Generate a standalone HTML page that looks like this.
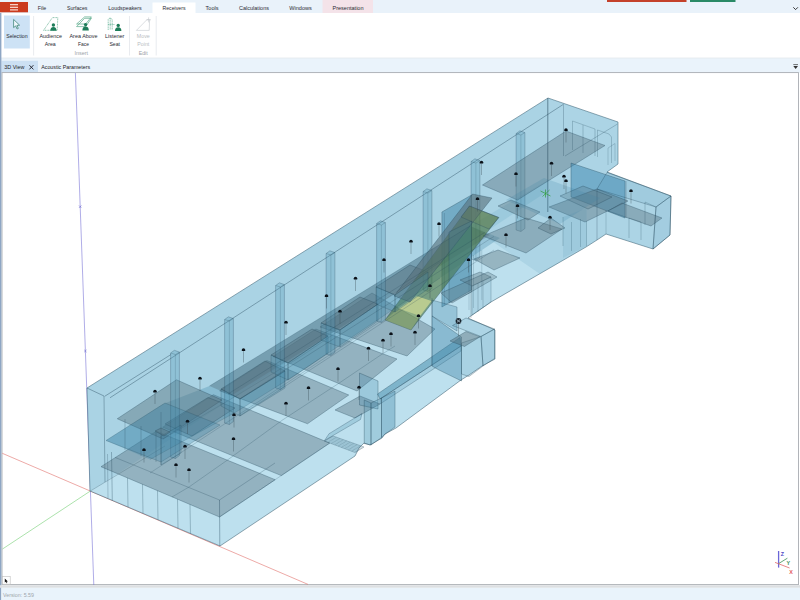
<!DOCTYPE html>
<html lang="en">
<head>
<meta charset="utf-8">
<title>3D View - Receivers</title>
<style>
html,body{margin:0;padding:0;background:#fff;width:800px;height:600px;overflow:hidden}
svg{display:block;font-family:"Liberation Sans",sans-serif}
text{font-family:"Liberation Sans",sans-serif}
.t{font-size:6.2px;fill:#2b2b33}
.g{font-size:6.2px;fill:#9aa0a6}
.lg{font-size:6.2px;fill:#b9bdc2}
</style>
</head>
<body>
<svg width="800" height="600" viewBox="0 0 800 600">
<!-- window chrome -->
<rect x="0" y="0" width="800" height="600" fill="#ffffff"/>
<rect x="0" y="0" width="800" height="13" fill="#e9f2fa"/>
<rect x="322.5" y="0" width="50.5" height="13" fill="#f4e3e9"/>
<rect x="152.5" y="2.5" width="43" height="11" fill="#ffffff"/>
<rect x="0" y="2" width="28" height="10.3" fill="#cb3b1e"/>
<g stroke="#ffe9e2" stroke-width="1.1"><line x1="10" y1="4.7" x2="18" y2="4.7"/><line x1="10" y1="7.3" x2="18" y2="7.3"/><line x1="10" y1="9.9" x2="18" y2="9.9"/></g>
<rect x="607" y="0" width="79.5" height="2" fill="#c4412a"/>
<rect x="690" y="0" width="45.5" height="2" fill="#2a8a66"/>
<polyline points="793.3,7.3 795.6,9.6 797.9,7.3" fill="none" stroke="#222" stroke-width="0.9"/>
<g class="t" text-anchor="middle">
<text x="42" y="9.8" textLength="8.5" lengthAdjust="spacingAndGlyphs">File</text>
<text x="77.2" y="9.8" textLength="20.5" lengthAdjust="spacingAndGlyphs">Surfaces</text>
<text x="125" y="9.8" textLength="33.5" lengthAdjust="spacingAndGlyphs">Loudspeakers</text>
<text x="174" y="9.8" textLength="23" lengthAdjust="spacingAndGlyphs">Receivers</text>
<text x="212" y="9.8" textLength="13" lengthAdjust="spacingAndGlyphs">Tools</text>
<text x="254" y="9.8" textLength="30" lengthAdjust="spacingAndGlyphs">Calculations</text>
<text x="300.5" y="9.8" textLength="22.5" lengthAdjust="spacingAndGlyphs">Windows</text>
<text x="348" y="9.8" textLength="31" lengthAdjust="spacingAndGlyphs">Presentation</text>
</g>
<!-- ribbon body -->
<rect x="0" y="13" width="800" height="45" fill="#ffffff"/>
<rect x="4" y="15.5" width="25.8" height="33" fill="#cde2f5"/>
<g stroke="#dfe3e8" stroke-width="0.7"><line x1="33.6" y1="16" x2="33.6" y2="55.5"/><line x1="129.5" y1="16" x2="129.5" y2="55.5"/><line x1="156.2" y1="16" x2="156.2" y2="55.5"/></g>
<!-- selection cursor -->
<path d="M13.6 19.4 L13.6 27.6 L15.7 25.9 L17.1 29 L18.3 28.4 L16.9 25.4 L19.6 25.2 Z" fill="#eef6fc" stroke="#2d7a68" stroke-width="0.7" stroke-linejoin="round"/>
<g class="t" text-anchor="middle">
<text x="16.9" y="38.2" textLength="21.5" lengthAdjust="spacingAndGlyphs">Selection</text>
<text x="50.7" y="38.2" textLength="22.5" lengthAdjust="spacingAndGlyphs">Audience</text>
<text x="50.2" y="45.7" textLength="11" lengthAdjust="spacingAndGlyphs">Area</text>
<text x="83.5" y="38.2" textLength="28" lengthAdjust="spacingAndGlyphs">Area Above</text>
<text x="83.5" y="45.7" textLength="11" lengthAdjust="spacingAndGlyphs">Face</text>
<text x="114.7" y="38.2" textLength="19.5" lengthAdjust="spacingAndGlyphs">Listener</text>
<text x="114.7" y="45.7" textLength="10.6" lengthAdjust="spacingAndGlyphs">Seat</text>
</g>
<g class="lg" text-anchor="middle">
<text x="143.3" y="38.2" textLength="13" lengthAdjust="spacingAndGlyphs">Move</text>
<text x="143.3" y="45.7" textLength="12" lengthAdjust="spacingAndGlyphs">Point</text>
</g>
<g class="g" text-anchor="middle">
<text x="81.2" y="55" textLength="13.5" lengthAdjust="spacingAndGlyphs">Insert</text>
<text x="143.2" y="55" textLength="9" lengthAdjust="spacingAndGlyphs">Edit</text>
</g>
<!-- ribbon icons -->
<g id="ic-aud">
<polygon points="43.6,30.3 52.4,17.6 57.8,17.6 57.2,30.3" fill="none" stroke="#3c9a76" stroke-width="0.6" stroke-dasharray="1 0.6"/>
<circle cx="53.4" cy="25" r="1.7" fill="#1d7d59"/><path d="M50.3 30.8 Q50.3 27 53.4 27 Q56.5 27 56.5 30.8 Z" fill="#1d7d59"/>
</g>
<g id="ic-above">
<polygon points="76.6,26.6 84.6,18.3 91.4,18.3 85.6,26.6" fill="none" stroke="#3c9a76" stroke-width="0.6"/>
<polygon points="76.6,24 84.6,16.9 91.4,16.9 85.6,24" fill="none" stroke="#3c9a76" stroke-width="0.6"/>
<circle cx="85.6" cy="24.6" r="1.7" fill="#1d7d59"/><path d="M82.4 30.6 Q82.4 26.6 85.6 26.6 Q88.8 26.6 88.8 30.6 Z" fill="#1d7d59"/>
</g>
<g id="ic-seat">
<path d="M108.2 30 L108.2 19.5 Q110 16.8 112.2 19.5 L112.2 30 M110.2 18 L110.2 30 M108.2 24.5 L114.5 24.5" fill="none" stroke="#4aa584" stroke-width="0.6" stroke-dasharray="1.2 0.5"/>
<circle cx="118.2" cy="25.4" r="1.7" fill="#1d7d59"/><path d="M115 31 Q115 27.3 118.2 27.3 Q121.4 27.3 121.4 31 Z" fill="#1d7d59"/>
</g>
<g id="ic-move" stroke="#c3c7cc" stroke-width="0.6" fill="none">
<polygon points="136.4,30.4 147,19.6 149.6,19.6 149.2,30.4"/><line x1="148.6" y1="17.4" x2="148.6" y2="22.4"/><line x1="146.2" y1="19.8" x2="151" y2="19.8"/>
</g>
<!-- document tab strip -->
<rect x="0" y="58" width="800" height="15" fill="#eaf3fb"/>
<rect x="0" y="57.6" width="800" height="0.8" fill="#e3e8ee"/>
<rect x="1.5" y="60.8" width="36.5" height="11.7" fill="#cce0f3"/>
<text x="4.3" y="69" class="t" style="fill:#1c1c26" textLength="20" lengthAdjust="spacingAndGlyphs">3D View</text>
<g stroke="#1c1c26" stroke-width="0.9"><line x1="29.4" y1="65.2" x2="33.4" y2="69.4"/><line x1="33.4" y1="65.2" x2="29.4" y2="69.4"/></g>
<text x="41.2" y="69" class="t" style="fill:#1c1c26" textLength="49" lengthAdjust="spacingAndGlyphs">Acoustic Parameters</text>
<line x1="793.3" y1="64.6" x2="798" y2="64.6" stroke="#333" stroke-width="0.7"/><polygon points="793.3,66 798,66 795.65,69" fill="#333"/>
<!-- viewport -->
<rect x="2" y="72.6" width="796.5" height="512" fill="#ffffff" stroke="#a9adb2" stroke-width="0.9"/>
<rect x="0" y="13" width="1.4" height="587" fill="#8ea6c4"/>
<rect x="0" y="585.2" width="800" height="2.6" fill="#dcdfe2"/>
<rect x="1.4" y="587.8" width="798.6" height="12.2" fill="#e9f3fb"/>
<text x="3" y="597.3" style="font-size:6px;fill:#9ea6ab" textLength="31" lengthAdjust="spacingAndGlyphs">Version: 5.59</text>
<rect x="2.6" y="576.6" width="7.6" height="7.6" fill="#ffffff" stroke="#bdbdbd" stroke-width="0.6"/>
<path d="M4.8 578.4 L4.8 582.6 L5.9 581.7 L6.7 583.3 L7.3 583 L6.6 581.5 L7.9 581.4 Z" fill="#111"/>
<!-- world axes -->
<g stroke-width="0.6" fill="none">
<line x1="75.4" y1="73" x2="93.8" y2="585" stroke="#7a76d6"/>
<line x1="2.3" y1="453.3" x2="308" y2="584.4" stroke="#e0706c"/>
<line x1="2.5" y1="549" x2="90.4" y2="491" stroke="#74cf74"/>
</g>
<g stroke="#5a56c8" stroke-width="0.5"><path d="M79 205.5 l2.4 2.4 m0 -2.4 l-2.4 2.4 M84.2 349.8 l2.4 2.4 m0 -2.4 l-2.4 2.4"/></g>
<polygon points="87,388 548,98 618,122 618,164 607,172 671,196 670,235 653,249 606,234 597,240 586,247 491,302 468,318 495,330 495,359 482,366 469,375 461,380 396,428 385,434 382,438 370,445 364,443 359,448 355,456 220,546 90,491" fill="#bde0ee" stroke="#24475a" stroke-width="0.6" stroke-opacity="0.8" stroke-linejoin="round"/>
<polygon points="87,388 548,98 548,191 105,482 90,491" fill="#5f9fbd" fill-opacity="0.2" stroke="none" stroke-width="0.5" stroke-opacity="0.75" stroke-linejoin="round"/>
<polygon points="548,98 618,122 618,164 607,172 671,196 670,235 653,249 606,234 586,247 540,274 470,226 548,180" fill="#5f9fbd" fill-opacity="0.18" stroke="none" stroke-width="0.5" stroke-opacity="0.75" stroke-linejoin="round"/>
<line x1="104.75" y1="396.25" x2="171" y2="354.5" stroke="#24475a" stroke-width="0.5" stroke-opacity="0.8"/>
<line x1="104" y1="396" x2="105" y2="482" stroke="#24475a" stroke-width="0.5" stroke-opacity="0.7"/>
<line x1="110" y1="397.75" x2="563.5" y2="104.25" stroke="#24475a" stroke-width="0.5" stroke-opacity="0.8"/>
<line x1="87" y1="388" x2="104" y2="396" stroke="#24475a" stroke-width="0.5" stroke-opacity="0.8"/>
<line x1="90.4" y1="491" x2="165" y2="446" stroke="#24475a" stroke-width="0.45" stroke-opacity="0.6"/>
<line x1="548" y1="98" x2="548" y2="212" stroke="#24475a" stroke-width="0.5" stroke-opacity="0.7"/>
<polygon points="101,466.7 156.4,431.2 275.2,479.7 219.5,517" fill="#566f7a" fill-opacity="0.4" stroke="#24475a" stroke-width="0.45" stroke-opacity="0.7" stroke-linejoin="round"/>
<polygon points="162.7,427.2 213.4,394.7 329.7,443.1 281.3,475.6" fill="#566f7a" fill-opacity="0.4" stroke="#24475a" stroke-width="0.45" stroke-opacity="0.7" stroke-linejoin="round"/>
<polygon points="219.6,390.8 266.9,360.5 348.75,395 307.5,423.75" fill="#566f7a" fill-opacity="0.4" stroke="#24475a" stroke-width="0.45" stroke-opacity="0.7" stroke-linejoin="round"/>
<polygon points="273.1,356.5 315.9,329.1 397,359 357,391" fill="#566f7a" fill-opacity="0.4" stroke="#24475a" stroke-width="0.45" stroke-opacity="0.7" stroke-linejoin="round"/>
<polygon points="320,327 372,293 435,329 407,356" fill="#566f7a" fill-opacity="0.4" stroke="#24475a" stroke-width="0.45" stroke-opacity="0.7" stroke-linejoin="round"/>
<polygon points="335,410 360,396 380,404 355,418" fill="#566f7a" fill-opacity="0.4" stroke="#24475a" stroke-width="0.45" stroke-opacity="0.7" stroke-linejoin="round"/>
<line x1="115" y1="457.4" x2="219.5" y2="500" stroke="#24475a" stroke-width="0.45" stroke-opacity="0.6"/>
<line x1="219.5" y1="500" x2="275" y2="463" stroke="#24475a" stroke-width="0.45" stroke-opacity="0.6"/>
<polygon points="106,440.5 163,404 209.5,386 470,226 500,238 440,278 300,372 236,412 150,459.5" fill="#3b83a6" fill-opacity="0.3" stroke="none" stroke-width="0.5" stroke-opacity="0.75" stroke-linejoin="round"/>
<polygon points="209.5,386 470,226 490,235 231.5,395.5" fill="#566f7a" fill-opacity="0.36" stroke="none" stroke-width="0.45" stroke-opacity="0.7" stroke-linejoin="round"/>
<polygon points="117.25,418.75 176.5,379.75 222,400 163,439" fill="#566f7a" fill-opacity="0.42" stroke="#24475a" stroke-width="0.45" stroke-opacity="0.7" stroke-linejoin="round"/>
<polygon points="221,389 265,361 285,371 240,399" fill="#566f7a" fill-opacity="0.4" stroke="#24475a" stroke-width="0.45" stroke-opacity="0.7" stroke-linejoin="round"/>
<polygon points="271,355 312,329 328,336 288,363" fill="#566f7a" fill-opacity="0.4" stroke="#24475a" stroke-width="0.45" stroke-opacity="0.7" stroke-linejoin="round"/>
<polygon points="321,323 360,297 378,304 340,330" fill="#566f7a" fill-opacity="0.4" stroke="#24475a" stroke-width="0.45" stroke-opacity="0.7" stroke-linejoin="round"/>
<polygon points="376,287 410,265 428,272 395,295" fill="#566f7a" fill-opacity="0.4" stroke="#24475a" stroke-width="0.45" stroke-opacity="0.7" stroke-linejoin="round"/>
<polygon points="165,424 208,397.5 235,408 192,436" fill="#566f7a" fill-opacity="0.35" stroke="#24475a" stroke-width="0.45" stroke-opacity="0.7" stroke-linejoin="round"/>
<polygon points="170.6,353 174.4,350.3 179.4,352.1 179.4,455.5 175.4,458.5 170.6,457" fill="#4d93b3" fill-opacity="0.28" stroke="#24475a" stroke-width="0.5" stroke-opacity="0.55" stroke-linejoin="round"/>
<line x1="175.4" y1="354.5" x2="175.4" y2="458.5" stroke="#24475a" stroke-width="0.4" stroke-opacity="0.45"/>
<polyline points="170.6,353 175.4,354.5 179.4,352.1" fill="none" stroke="#24475a" stroke-width="0.4" stroke-opacity="0.6"/>
<polygon points="224.6,319.5 228.4,316.8 233.4,318.6 233.4,421.5 229.4,424.5 224.6,423" fill="#4d93b3" fill-opacity="0.28" stroke="#24475a" stroke-width="0.5" stroke-opacity="0.55" stroke-linejoin="round"/>
<line x1="229.4" y1="321" x2="229.4" y2="424.5" stroke="#24475a" stroke-width="0.4" stroke-opacity="0.45"/>
<polyline points="224.6,319.5 229.4,321 233.4,318.6" fill="none" stroke="#24475a" stroke-width="0.4" stroke-opacity="0.6"/>
<polygon points="275.6,285.5 279.4,282.8 284.4,284.6 284.4,386.5 280.4,389.5 275.6,388" fill="#4d93b3" fill-opacity="0.28" stroke="#24475a" stroke-width="0.5" stroke-opacity="0.55" stroke-linejoin="round"/>
<line x1="280.4" y1="287" x2="280.4" y2="389.5" stroke="#24475a" stroke-width="0.4" stroke-opacity="0.45"/>
<polyline points="275.6,285.5 280.4,287 284.4,284.6" fill="none" stroke="#24475a" stroke-width="0.4" stroke-opacity="0.6"/>
<polygon points="326.1,253.5 329.9,250.8 334.9,252.6 334.9,352.5 330.9,355.5 326.1,354" fill="#4d93b3" fill-opacity="0.28" stroke="#24475a" stroke-width="0.5" stroke-opacity="0.55" stroke-linejoin="round"/>
<line x1="330.9" y1="255" x2="330.9" y2="355.5" stroke="#24475a" stroke-width="0.4" stroke-opacity="0.45"/>
<polyline points="326.1,253.5 330.9,255 334.9,252.6" fill="none" stroke="#24475a" stroke-width="0.4" stroke-opacity="0.6"/>
<polygon points="376.6,223.5 380.4,220.8 385.4,222.6 385.4,319.5 381.4,322.5 376.6,321" fill="#4d93b3" fill-opacity="0.28" stroke="#24475a" stroke-width="0.5" stroke-opacity="0.55" stroke-linejoin="round"/>
<line x1="381.4" y1="225" x2="381.4" y2="322.5" stroke="#24475a" stroke-width="0.4" stroke-opacity="0.45"/>
<polyline points="376.6,223.5 381.4,225 385.4,222.6" fill="none" stroke="#24475a" stroke-width="0.4" stroke-opacity="0.6"/>
<polygon points="423.1,191.5 426.9,188.8 431.9,190.6 431.9,288.5 427.9,291.5 423.1,290" fill="#4d93b3" fill-opacity="0.28" stroke="#24475a" stroke-width="0.5" stroke-opacity="0.55" stroke-linejoin="round"/>
<line x1="427.9" y1="193" x2="427.9" y2="291.5" stroke="#24475a" stroke-width="0.4" stroke-opacity="0.45"/>
<polyline points="423.1,191.5 427.9,193 431.9,190.6" fill="none" stroke="#24475a" stroke-width="0.4" stroke-opacity="0.6"/>
<polygon points="471.1,161.5 474.9,158.8 479.9,160.6 479.9,257.5 475.9,260.5 471.1,259" fill="#4d93b3" fill-opacity="0.28" stroke="#24475a" stroke-width="0.5" stroke-opacity="0.55" stroke-linejoin="round"/>
<line x1="475.9" y1="163" x2="475.9" y2="260.5" stroke="#24475a" stroke-width="0.4" stroke-opacity="0.45"/>
<polyline points="471.1,161.5 475.9,163 479.9,160.6" fill="none" stroke="#24475a" stroke-width="0.4" stroke-opacity="0.6"/>
<polygon points="516.1,133.5 519.9,130.8 524.9,132.6 524.9,228.5 520.9,231.5 516.1,230" fill="#4d93b3" fill-opacity="0.28" stroke="#24475a" stroke-width="0.5" stroke-opacity="0.55" stroke-linejoin="round"/>
<line x1="520.9" y1="135" x2="520.9" y2="231.5" stroke="#24475a" stroke-width="0.4" stroke-opacity="0.45"/>
<polyline points="516.1,133.5 520.9,135 524.9,132.6" fill="none" stroke="#24475a" stroke-width="0.4" stroke-opacity="0.6"/>
<polygon points="482.5,185 566,131 605,145.5 517.5,200" fill="#566f7a" fill-opacity="0.4" stroke="#24475a" stroke-width="0.45" stroke-opacity="0.7" stroke-linejoin="round"/>
<polygon points="571,163 625,181 625,218 571,197" fill="#2f7fa8" fill-opacity="0.45" stroke="#24475a" stroke-width="0.45" stroke-opacity="0.75" stroke-linejoin="round"/>
<polygon points="549,207 597,189 628,201 585,222" fill="#566f7a" fill-opacity="0.4" stroke="#24475a" stroke-width="0.45" stroke-opacity="0.7" stroke-linejoin="round"/>
<polygon points="608,211 622,203 662,218 651,226" fill="#566f7a" fill-opacity="0.4" stroke="#24475a" stroke-width="0.45" stroke-opacity="0.7" stroke-linejoin="round"/>
<polygon points="483,236 526,218 562,229 526,253" fill="#566f7a" fill-opacity="0.38" stroke="#24475a" stroke-width="0.45" stroke-opacity="0.7" stroke-linejoin="round"/>
<polygon points="474,259 498,250 520,258 494,270" fill="#566f7a" fill-opacity="0.38" stroke="#24475a" stroke-width="0.45" stroke-opacity="0.7" stroke-linejoin="round"/>
<polygon points="498,206 511,200 540,212 528,220" fill="#566f7a" fill-opacity="0.38" stroke="#24475a" stroke-width="0.45" stroke-opacity="0.7" stroke-linejoin="round"/>
<polygon points="441.9,212 471.5,195 471.5,290 441.9,307" fill="#3b83a6" fill-opacity="0.5" stroke="#24475a" stroke-width="0.45" stroke-opacity="0.75" stroke-linejoin="round"/>
<line x1="444.4" y1="213" x2="444.4" y2="305" stroke="#24475a" stroke-width="0.4" stroke-opacity="0.5"/>
<polygon points="385,320 411,330 498.75,217.5 469.5,206" fill="#456f36" fill-opacity="0.58" stroke="#24475a" stroke-width="0.45" stroke-opacity="0.75" stroke-linejoin="round"/>
<polygon points="398.5,308.5 416.5,296 431.5,301 420,316" fill="#f0f09a" fill-opacity="0.55" stroke="none" stroke-width="0.5" stroke-opacity="0.75" stroke-linejoin="round"/>
<polygon points="385,320 398.5,308.5 420,316 411,330" fill="#d9e08a" fill-opacity="0.25" stroke="none" stroke-width="0.5" stroke-opacity="0.75" stroke-linejoin="round"/>
<polygon points="394,296 410,302 492,198 472.5,194" fill="#566f7a" fill-opacity="0.6" stroke="#24475a" stroke-width="0.45" stroke-opacity="0.7" stroke-linejoin="round"/>
<polygon points="469.5,206 498.75,217.5 489,229 461,217" fill="#6f7f4a" fill-opacity="0.2" stroke="#24475a" stroke-width="0.4" stroke-opacity="0.75" stroke-linejoin="round"/>
<polygon points="449,232 471.5,221 471.5,292 449,303" fill="#3b83a6" fill-opacity="0.2" stroke="#24475a" stroke-width="0.4" stroke-opacity="0.75" stroke-linejoin="round"/>
<polygon points="359.5,373 378,381 378,409 359.5,405" fill="#3b83a6" fill-opacity="0.25" stroke="#24475a" stroke-width="0.45" stroke-opacity="0.75" stroke-linejoin="round"/>
<polygon points="377.5,394 460,337.5 461,346 380,399" fill="#3b83a6" fill-opacity="0.48" stroke="#24475a" stroke-width="0.45" stroke-opacity="0.75" stroke-linejoin="round"/>
<polygon points="380,399 461,346 461,351 380,404" fill="#3b83a6" fill-opacity="0.2" stroke="#24475a" stroke-width="0.4" stroke-opacity="0.75" stroke-linejoin="round"/>
<polygon points="432,300 457,307 457,331 432,316" fill="#3b83a6" fill-opacity="0.3" stroke="#24475a" stroke-width="0.4" stroke-opacity="0.75" stroke-linejoin="round"/>
<line x1="432" y1="298" x2="432" y2="366" stroke="#24475a" stroke-width="0.45" stroke-opacity="0.6"/>
<polygon points="381.5,398 395,391 395,427 384.5,434.5 381.5,437.5" fill="#3b83a6" fill-opacity="0.35" stroke="#24475a" stroke-width="0.45" stroke-opacity="0.75" stroke-linejoin="round"/>
<polygon points="364.25,400 371,403 371,445 364.25,443.5" fill="#3b83a6" fill-opacity="0.22" stroke="#24475a" stroke-width="0.45" stroke-opacity="0.75" stroke-linejoin="round"/>
<polygon points="324.5,440.5 329,433.75 362,413.5 360.5,419.5" fill="#3b83a6" fill-opacity="0.22" stroke="#24475a" stroke-width="0.4" stroke-opacity="0.75" stroke-linejoin="round"/>
<polygon points="371,403 381.5,398 381.5,437.5 371,445" fill="#3b83a6" fill-opacity="0.22" stroke="#24475a" stroke-width="0.45" stroke-opacity="0.75" stroke-linejoin="round"/>
<polygon points="432,316 461.5,337 461.5,381 439,370 432,366" fill="#3b83a6" fill-opacity="0.4" stroke="#24475a" stroke-width="0.45" stroke-opacity="0.75" stroke-linejoin="round"/>
<polygon points="452.5,325.5 466,318 494.5,329 481,336.5" fill="#3b83a6" fill-opacity="0.12" stroke="#24475a" stroke-width="0.45" stroke-opacity="0.75" stroke-linejoin="round"/>
<polygon points="481,336.5 494.5,329 494.5,358.5 483,366" fill="#3b83a6" fill-opacity="0.18" stroke="#24475a" stroke-width="0.45" stroke-opacity="0.75" stroke-linejoin="round"/>
<polygon points="461.5,343 481,336.5 483,366 469,376.5 461.5,374" fill="#3b83a6" fill-opacity="0.15" stroke="#24475a" stroke-width="0.45" stroke-opacity="0.75" stroke-linejoin="round"/>
<polygon points="450,341 466,331.5 480,336.75 464.5,346.5" fill="#566f7a" fill-opacity="0.45" stroke="#24475a" stroke-width="0.45" stroke-opacity="0.7" stroke-linejoin="round"/>
<polygon points="324.5,441 333,436 364,447 355,452.5" fill="#3b83a6" fill-opacity="0.12" stroke="#24475a" stroke-width="0.4" stroke-opacity="0.75" stroke-linejoin="round"/>
<line x1="325.714" y1="440.286" x2="356.286" y2="451.714" stroke="#24475a" stroke-width="0.3" stroke-opacity="0.5"/>
<line x1="326.929" y1="439.571" x2="357.571" y2="450.929" stroke="#24475a" stroke-width="0.3" stroke-opacity="0.5"/>
<line x1="328.143" y1="438.857" x2="358.857" y2="450.143" stroke="#24475a" stroke-width="0.3" stroke-opacity="0.5"/>
<line x1="329.357" y1="438.143" x2="360.143" y2="449.357" stroke="#24475a" stroke-width="0.3" stroke-opacity="0.5"/>
<line x1="330.571" y1="437.429" x2="361.429" y2="448.571" stroke="#24475a" stroke-width="0.3" stroke-opacity="0.5"/>
<line x1="331.786" y1="436.714" x2="362.714" y2="447.786" stroke="#24475a" stroke-width="0.3" stroke-opacity="0.5"/>
<line x1="327.889" y1="442.278" x2="336.444" y2="437.222" stroke="#24475a" stroke-width="0.3" stroke-opacity="0.5"/>
<line x1="331.278" y1="443.556" x2="339.889" y2="438.444" stroke="#24475a" stroke-width="0.3" stroke-opacity="0.5"/>
<line x1="334.667" y1="444.833" x2="343.333" y2="439.667" stroke="#24475a" stroke-width="0.3" stroke-opacity="0.5"/>
<line x1="338.056" y1="446.111" x2="346.778" y2="440.889" stroke="#24475a" stroke-width="0.3" stroke-opacity="0.5"/>
<line x1="341.444" y1="447.389" x2="350.222" y2="442.111" stroke="#24475a" stroke-width="0.3" stroke-opacity="0.5"/>
<line x1="344.833" y1="448.667" x2="353.667" y2="443.333" stroke="#24475a" stroke-width="0.3" stroke-opacity="0.5"/>
<line x1="348.222" y1="449.944" x2="357.111" y2="444.556" stroke="#24475a" stroke-width="0.3" stroke-opacity="0.5"/>
<line x1="351.611" y1="451.222" x2="360.556" y2="445.778" stroke="#24475a" stroke-width="0.3" stroke-opacity="0.5"/>
<line x1="127.5" y1="477.949" x2="128" y2="507.077" stroke="#24475a" stroke-width="0.45" stroke-opacity="0.65"/>
<line x1="142.5" y1="484.316" x2="143" y2="513.423" stroke="#24475a" stroke-width="0.45" stroke-opacity="0.65"/>
<line x1="157.5" y1="490.683" x2="158" y2="519.769" stroke="#24475a" stroke-width="0.45" stroke-opacity="0.65"/>
<line x1="177.5" y1="499.172" x2="178" y2="528.231" stroke="#24475a" stroke-width="0.45" stroke-opacity="0.65"/>
<line x1="190" y1="504.478" x2="190.5" y2="533.519" stroke="#24475a" stroke-width="0.45" stroke-opacity="0.65"/>
<line x1="219.5" y1="500" x2="219.8" y2="546" stroke="#24475a" stroke-width="0.5" stroke-opacity="0.75"/>
<line x1="107.5" y1="454" x2="108" y2="498.5" stroke="#24475a" stroke-width="0.45" stroke-opacity="0.55"/>
<line x1="111.5" y1="452" x2="112.3" y2="500.5" stroke="#24475a" stroke-width="0.6" stroke-opacity="0.55"/>
<polyline points="172,497 189,487 227.5,460 282.5,420 340,382.5 380,355.5 395,346" fill="none" stroke="#24475a" stroke-width="0.4" stroke-opacity="0.6"/>
<line x1="150" y1="473" x2="381" y2="321" stroke="#24475a" stroke-width="0.4" stroke-opacity="0.5"/>
<line x1="219.5" y1="517" x2="329.7" y2="443.1" stroke="#24475a" stroke-width="0.4" stroke-opacity="0.5"/>
<polygon points="240,399 285,371 285,388 240,416" fill="#3b83a6" fill-opacity="0.22" stroke="#24475a" stroke-width="0.4" stroke-opacity="0.6" stroke-linejoin="round"/>
<polygon points="221,389 240,399 240,416 221,406" fill="#3b83a6" fill-opacity="0.17600000000000002" stroke="#24475a" stroke-width="0.4" stroke-opacity="0.6" stroke-linejoin="round"/>
<polygon points="288,363 328,336 328,353 288,380" fill="#3b83a6" fill-opacity="0.22" stroke="#24475a" stroke-width="0.4" stroke-opacity="0.6" stroke-linejoin="round"/>
<polygon points="271,355 288,363 288,380 271,372" fill="#3b83a6" fill-opacity="0.17600000000000002" stroke="#24475a" stroke-width="0.4" stroke-opacity="0.6" stroke-linejoin="round"/>
<polygon points="340,330 378,304 378,321 340,347" fill="#3b83a6" fill-opacity="0.22" stroke="#24475a" stroke-width="0.4" stroke-opacity="0.6" stroke-linejoin="round"/>
<polygon points="321,323 340,330 340,347 321,340" fill="#3b83a6" fill-opacity="0.17600000000000002" stroke="#24475a" stroke-width="0.4" stroke-opacity="0.6" stroke-linejoin="round"/>
<polygon points="395,295 428,272 428,289 395,312" fill="#3b83a6" fill-opacity="0.22" stroke="#24475a" stroke-width="0.4" stroke-opacity="0.6" stroke-linejoin="round"/>
<polygon points="376,287 395,295 395,312 376,304" fill="#3b83a6" fill-opacity="0.17600000000000002" stroke="#24475a" stroke-width="0.4" stroke-opacity="0.6" stroke-linejoin="round"/>
<polygon points="106,440.5 165,403 220,425 161,462" fill="#3b83a6" fill-opacity="0.28" stroke="#24475a" stroke-width="0.4" stroke-opacity="0.6" stroke-linejoin="round"/>
<polygon points="161,436 181,425 181,453 161,465" fill="#3b83a6" fill-opacity="0.2" stroke="#24475a" stroke-width="0.4" stroke-opacity="0.6" stroke-linejoin="round"/>
<polygon points="155,431 161,428 170,432 164,436" fill="#566f7a" fill-opacity="0.4" stroke="#24475a" stroke-width="0.45" stroke-opacity="0.7" stroke-linejoin="round"/>
<line x1="125" y1="419" x2="125" y2="450" stroke="#24475a" stroke-width="0.4" stroke-opacity="0.6"/>
<line x1="141" y1="426" x2="141" y2="456" stroke="#24475a" stroke-width="0.4" stroke-opacity="0.6"/>
<line x1="156" y1="432" x2="156" y2="462" stroke="#24475a" stroke-width="0.4" stroke-opacity="0.6"/>
<line x1="161" y1="412" x2="161" y2="465" stroke="#24475a" stroke-width="0.4" stroke-opacity="0.6"/>
<line x1="209.5" y1="386" x2="470" y2="226" stroke="#24475a" stroke-width="0.4" stroke-opacity="0.55"/>
<line x1="228" y1="394" x2="484.8" y2="232.4" stroke="#24475a" stroke-width="0.4" stroke-opacity="0.55"/>
<line x1="239.5" y1="399" x2="494" y2="236.4" stroke="#24475a" stroke-width="0.4" stroke-opacity="0.55"/>
<line x1="239.5" y1="416" x2="494" y2="250" stroke="#24475a" stroke-width="0.4" stroke-opacity="0.55"/>
<polygon points="538,228 551,218 565,228 551,234" fill="#566f7a" fill-opacity="0.35" stroke="#24475a" stroke-width="0.45" stroke-opacity="0.7" stroke-linejoin="round"/>
<polygon points="560,196 583,186 612,197 588,209" fill="#566f7a" fill-opacity="0.25" stroke="#24475a" stroke-width="0.45" stroke-opacity="0.7" stroke-linejoin="round"/>
<line x1="563" y1="217" x2="563" y2="246" stroke="#24475a" stroke-width="0.4" stroke-opacity="0.6"/>
<line x1="571.5" y1="222" x2="571.5" y2="251" stroke="#24475a" stroke-width="0.4" stroke-opacity="0.6"/>
<line x1="580.5" y1="219" x2="580.5" y2="247" stroke="#24475a" stroke-width="0.4" stroke-opacity="0.6"/>
<line x1="586.5" y1="221" x2="586.5" y2="246" stroke="#24475a" stroke-width="0.4" stroke-opacity="0.6"/>
<polygon points="563,217 586.5,208 586.5,246 563,258" fill="#3b83a6" fill-opacity="0.12" stroke="none" stroke-width="0.5" stroke-opacity="0.75" stroke-linejoin="round"/>
<polygon points="607,172.4 671,196 656,207 597,189" fill="#3b83a6" fill-opacity="0.1" stroke="#24475a" stroke-width="0.45" stroke-opacity="0.7" stroke-linejoin="round"/>
<polygon points="656,207 671,196 670,235 653,249" fill="#3b83a6" fill-opacity="0.08" stroke="#24475a" stroke-width="0.45" stroke-opacity="0.7" stroke-linejoin="round"/>
<line x1="597" y1="189" x2="597" y2="240" stroke="#24475a" stroke-width="0.45" stroke-opacity="0.6"/>
<line x1="656" y1="207" x2="653" y2="249" stroke="#24475a" stroke-width="0.45" stroke-opacity="0.7"/>
<line x1="626" y1="181" x2="626" y2="218" stroke="#24475a" stroke-width="0.45" stroke-opacity="0.6"/>
<polyline points="645,225 645,202 656,207" fill="none" stroke="#24475a" stroke-width="0.4" stroke-opacity="0.6"/>
<polyline points="629,238 629,218 641,222 641,240" fill="none" stroke="#24475a" stroke-width="0.4" stroke-opacity="0.6"/>
<line x1="606" y1="234" x2="606" y2="210" stroke="#24475a" stroke-width="0.4" stroke-opacity="0.5"/>
<polyline points="572.5,150 572.5,121 595,129 595,156" fill="none" stroke="#24475a" stroke-width="0.4" stroke-opacity="0.6"/>
<line x1="583" y1="125" x2="583" y2="153" stroke="#24475a" stroke-width="0.4" stroke-opacity="0.6"/>
<polyline points="597.5,157 597.5,130 609,134 611.5,137 611.5,163" fill="none" stroke="#24475a" stroke-width="0.4" stroke-opacity="0.6"/>
<polyline points="608,165 608,148 615,143.5 615,161" fill="none" stroke="#24475a" stroke-width="0.4" stroke-opacity="0.5"/>
<line x1="617.5" y1="124" x2="565" y2="156" stroke="#24475a" stroke-width="0.45" stroke-opacity="0.6"/>
<line x1="563.5" y1="104.5" x2="563.5" y2="156" stroke="#24475a" stroke-width="0.45" stroke-opacity="0.6"/>
<line x1="547.5" y1="98" x2="547.5" y2="212" stroke="#24475a" stroke-width="0.45" stroke-opacity="0.6"/>
<polygon points="460,280 480,272 491,277 472,286" fill="#566f7a" fill-opacity="0.35" stroke="#24475a" stroke-width="0.45" stroke-opacity="0.7" stroke-linejoin="round"/>
<polygon points="472,286 491,277 491,302 472,315" fill="#3b83a6" fill-opacity="0.12" stroke="#24475a" stroke-width="0.4" stroke-opacity="0.6" stroke-linejoin="round"/>
<line x1="471" y1="286" x2="471" y2="318" stroke="#24475a" stroke-width="0.4" stroke-opacity="0.55"/>
<line x1="478" y1="283" x2="478" y2="312" stroke="#24475a" stroke-width="0.4" stroke-opacity="0.55"/>
<line x1="483" y1="281" x2="483" y2="308" stroke="#24475a" stroke-width="0.4" stroke-opacity="0.55"/>
<polygon points="441,293 488,272 497,277 452,303" fill="#566f7a" fill-opacity="0.3" stroke="#24475a" stroke-width="0.45" stroke-opacity="0.7" stroke-linejoin="round"/>
<line x1="469" y1="257" x2="469" y2="310" stroke="#24475a" stroke-width="0.4" stroke-opacity="0.45"/>
<line x1="473.5" y1="255" x2="473.5" y2="308" stroke="#24475a" stroke-width="0.4" stroke-opacity="0.45"/>
<line x1="481.75" y1="250" x2="481.75" y2="300" stroke="#24475a" stroke-width="0.4" stroke-opacity="0.45"/>
<polygon points="506,200 544,178 600,198 560,224" fill="#3b83a6" fill-opacity="0.2" stroke="none" stroke-width="0.5" stroke-opacity="0.75" stroke-linejoin="round"/>
<polyline points="150,459.5 236,412 300,372 440,278" fill="none" stroke="#24475a" stroke-width="0.4" stroke-opacity="0.45"/>
<polyline points="163,439 236,396 300,357 440,262" fill="none" stroke="#24475a" stroke-width="0.4" stroke-opacity="0.4"/>
<line x1="155" y1="392.5" x2="155" y2="404" stroke="#3a4a52" stroke-width="0.5" stroke-opacity="0.7"/>
<path d="M153.3 392.5 L153.3 391.3 Q153.4 389.7 155 389.7 Q156.6 389.7 156.7 391.3 L156.7 392.5 Z" fill="#0b1118"/>
<line x1="200" y1="379.5" x2="200" y2="391" stroke="#3a4a52" stroke-width="0.5" stroke-opacity="0.7"/>
<path d="M198.3 379.5 L198.3 378.3 Q198.4 376.7 200 376.7 Q201.6 376.7 201.7 378.3 L201.7 379.5 Z" fill="#0b1118"/>
<line x1="243.5" y1="351" x2="243.5" y2="362.5" stroke="#3a4a52" stroke-width="0.5" stroke-opacity="0.7"/>
<path d="M241.8 351 L241.8 349.8 Q241.9 348.2 243.5 348.2 Q245.1 348.2 245.2 349.8 L245.2 351 Z" fill="#0b1118"/>
<line x1="286" y1="323.5" x2="286" y2="335" stroke="#3a4a52" stroke-width="0.5" stroke-opacity="0.7"/>
<path d="M284.3 323.5 L284.3 322.3 Q284.4 320.7 286 320.7 Q287.6 320.7 287.7 322.3 L287.7 323.5 Z" fill="#0b1118"/>
<line x1="340" y1="312.5" x2="340" y2="324" stroke="#3a4a52" stroke-width="0.5" stroke-opacity="0.7"/>
<path d="M338.3 312.5 L338.3 311.3 Q338.4 309.7 340 309.7 Q341.6 309.7 341.7 311.3 L341.7 312.5 Z" fill="#0b1118"/>
<line x1="187.5" y1="422.5" x2="187.5" y2="434" stroke="#3a4a52" stroke-width="0.5" stroke-opacity="0.7"/>
<path d="M185.8 422.5 L185.8 421.3 Q185.9 419.7 187.5 419.7 Q189.1 419.7 189.2 421.3 L189.2 422.5 Z" fill="#0b1118"/>
<line x1="234" y1="416" x2="234" y2="427.5" stroke="#3a4a52" stroke-width="0.5" stroke-opacity="0.7"/>
<path d="M232.3 416 L232.3 414.8 Q232.4 413.2 234 413.2 Q235.6 413.2 235.7 414.8 L235.7 416 Z" fill="#0b1118"/>
<line x1="233.5" y1="440" x2="233.5" y2="451.5" stroke="#3a4a52" stroke-width="0.5" stroke-opacity="0.7"/>
<path d="M231.8 440 L231.8 438.8 Q231.9 437.2 233.5 437.2 Q235.1 437.2 235.2 438.8 L235.2 440 Z" fill="#0b1118"/>
<line x1="185" y1="447.5" x2="185" y2="459" stroke="#3a4a52" stroke-width="0.5" stroke-opacity="0.7"/>
<path d="M183.3 447.5 L183.3 446.3 Q183.4 444.7 185 444.7 Q186.6 444.7 186.7 446.3 L186.7 447.5 Z" fill="#0b1118"/>
<line x1="144" y1="451" x2="144" y2="462.5" stroke="#3a4a52" stroke-width="0.5" stroke-opacity="0.7"/>
<path d="M142.3 451 L142.3 449.8 Q142.4 448.2 144 448.2 Q145.6 448.2 145.7 449.8 L145.7 451 Z" fill="#0b1118"/>
<line x1="176" y1="466" x2="176" y2="477.5" stroke="#3a4a52" stroke-width="0.5" stroke-opacity="0.7"/>
<path d="M174.3 466 L174.3 464.8 Q174.4 463.2 176 463.2 Q177.6 463.2 177.7 464.8 L177.7 466 Z" fill="#0b1118"/>
<line x1="189" y1="471" x2="189" y2="482.5" stroke="#3a4a52" stroke-width="0.5" stroke-opacity="0.7"/>
<path d="M187.3 471 L187.3 469.8 Q187.4 468.2 189 468.2 Q190.6 468.2 190.7 469.8 L190.7 471 Z" fill="#0b1118"/>
<line x1="286" y1="404.5" x2="286" y2="416" stroke="#3a4a52" stroke-width="0.5" stroke-opacity="0.7"/>
<path d="M284.3 404.5 L284.3 403.3 Q284.4 401.7 286 401.7 Q287.6 401.7 287.7 403.3 L287.7 404.5 Z" fill="#0b1118"/>
<line x1="308.5" y1="389" x2="308.5" y2="400.5" stroke="#3a4a52" stroke-width="0.5" stroke-opacity="0.7"/>
<path d="M306.8 389 L306.8 387.8 Q306.9 386.2 308.5 386.2 Q310.1 386.2 310.2 387.8 L310.2 389 Z" fill="#0b1118"/>
<line x1="338" y1="370" x2="338" y2="381.5" stroke="#3a4a52" stroke-width="0.5" stroke-opacity="0.7"/>
<path d="M336.3 370 L336.3 368.8 Q336.4 367.2 338 367.2 Q339.6 367.2 339.7 368.8 L339.7 370 Z" fill="#0b1118"/>
<line x1="359" y1="388.5" x2="359" y2="400" stroke="#3a4a52" stroke-width="0.5" stroke-opacity="0.7"/>
<path d="M357.3 388.5 L357.3 387.3 Q357.4 385.7 359 385.7 Q360.6 385.7 360.7 387.3 L360.7 388.5 Z" fill="#0b1118"/>
<line x1="368.5" y1="349.5" x2="368.5" y2="361" stroke="#3a4a52" stroke-width="0.5" stroke-opacity="0.7"/>
<path d="M366.8 349.5 L366.8 348.3 Q366.9 346.7 368.5 346.7 Q370.1 346.7 370.2 348.3 L370.2 349.5 Z" fill="#0b1118"/>
<line x1="383" y1="341.5" x2="383" y2="353" stroke="#3a4a52" stroke-width="0.5" stroke-opacity="0.7"/>
<path d="M381.3 341.5 L381.3 340.3 Q381.4 338.7 383 338.7 Q384.6 338.7 384.7 340.3 L384.7 341.5 Z" fill="#0b1118"/>
<line x1="391" y1="335" x2="391" y2="346.5" stroke="#3a4a52" stroke-width="0.5" stroke-opacity="0.7"/>
<path d="M389.3 335 L389.3 333.8 Q389.4 332.2 391 332.2 Q392.6 332.2 392.7 333.8 L392.7 335 Z" fill="#0b1118"/>
<line x1="566" y1="131" x2="566" y2="142.5" stroke="#3a4a52" stroke-width="0.5" stroke-opacity="0.7"/>
<path d="M564.3 131 L564.3 129.8 Q564.4 128.2 566 128.2 Q567.6 128.2 567.7 129.8 L567.7 131 Z" fill="#0b1118"/>
<line x1="481.5" y1="163.5" x2="481.5" y2="175" stroke="#3a4a52" stroke-width="0.5" stroke-opacity="0.7"/>
<path d="M479.8 163.5 L479.8 162.3 Q479.9 160.7 481.5 160.7 Q483.1 160.7 483.2 162.3 L483.2 163.5 Z" fill="#0b1118"/>
<line x1="516" y1="175" x2="516" y2="186.5" stroke="#3a4a52" stroke-width="0.5" stroke-opacity="0.7"/>
<path d="M514.3 175 L514.3 173.8 Q514.4 172.2 516 172.2 Q517.6 172.2 517.7 173.8 L517.7 175 Z" fill="#0b1118"/>
<line x1="551.5" y1="164.5" x2="551.5" y2="176" stroke="#3a4a52" stroke-width="0.5" stroke-opacity="0.7"/>
<path d="M549.8 164.5 L549.8 163.3 Q549.9 161.7 551.5 161.7 Q553.1 161.7 553.2 163.3 L553.2 164.5 Z" fill="#0b1118"/>
<line x1="564" y1="177.5" x2="564" y2="189" stroke="#3a4a52" stroke-width="0.5" stroke-opacity="0.7"/>
<path d="M562.3 177.5 L562.3 176.3 Q562.4 174.7 564 174.7 Q565.6 174.7 565.7 176.3 L565.7 177.5 Z" fill="#0b1118"/>
<line x1="566" y1="182" x2="566" y2="193.5" stroke="#3a4a52" stroke-width="0.5" stroke-opacity="0.7"/>
<path d="M564.3 182 L564.3 180.8 Q564.4 179.2 566 179.2 Q567.6 179.2 567.7 180.8 L567.7 182 Z" fill="#0b1118"/>
<line x1="631" y1="192" x2="631" y2="203.5" stroke="#3a4a52" stroke-width="0.5" stroke-opacity="0.7"/>
<path d="M629.3 192 L629.3 190.8 Q629.4 189.2 631 189.2 Q632.6 189.2 632.7 190.8 L632.7 192 Z" fill="#0b1118"/>
<line x1="477.5" y1="200" x2="477.5" y2="211.5" stroke="#3a4a52" stroke-width="0.5" stroke-opacity="0.7"/>
<path d="M475.8 200 L475.8 198.8 Q475.9 197.2 477.5 197.2 Q479.1 197.2 479.2 198.8 L479.2 200 Z" fill="#0b1118"/>
<line x1="517.5" y1="207" x2="517.5" y2="218.5" stroke="#3a4a52" stroke-width="0.5" stroke-opacity="0.7"/>
<path d="M515.8 207 L515.8 205.8 Q515.9 204.2 517.5 204.2 Q519.1 204.2 519.2 205.8 L519.2 207 Z" fill="#0b1118"/>
<line x1="550" y1="218.5" x2="550" y2="230" stroke="#3a4a52" stroke-width="0.5" stroke-opacity="0.7"/>
<path d="M548.3 218.5 L548.3 217.3 Q548.4 215.7 550 215.7 Q551.6 215.7 551.7 217.3 L551.7 218.5 Z" fill="#0b1118"/>
<line x1="439" y1="225" x2="439" y2="236.5" stroke="#3a4a52" stroke-width="0.5" stroke-opacity="0.7"/>
<path d="M437.3 225 L437.3 223.8 Q437.4 222.2 439 222.2 Q440.6 222.2 440.7 223.8 L440.7 225 Z" fill="#0b1118"/>
<line x1="506" y1="236" x2="506" y2="247.5" stroke="#3a4a52" stroke-width="0.5" stroke-opacity="0.7"/>
<path d="M504.3 236 L504.3 234.8 Q504.4 233.2 506 233.2 Q507.6 233.2 507.7 234.8 L507.7 236 Z" fill="#0b1118"/>
<line x1="411" y1="242.5" x2="411" y2="254" stroke="#3a4a52" stroke-width="0.5" stroke-opacity="0.7"/>
<path d="M409.3 242.5 L409.3 241.3 Q409.4 239.7 411 239.7 Q412.6 239.7 412.7 241.3 L412.7 242.5 Z" fill="#0b1118"/>
<line x1="468.5" y1="261" x2="468.5" y2="272.5" stroke="#3a4a52" stroke-width="0.5" stroke-opacity="0.7"/>
<path d="M466.8 261 L466.8 259.8 Q466.9 258.2 468.5 258.2 Q470.1 258.2 470.2 259.8 L470.2 261 Z" fill="#0b1118"/>
<line x1="430" y1="287" x2="430" y2="298.5" stroke="#3a4a52" stroke-width="0.5" stroke-opacity="0.7"/>
<path d="M428.3 287 L428.3 285.8 Q428.4 284.2 430 284.2 Q431.6 284.2 431.7 285.8 L431.7 287 Z" fill="#0b1118"/>
<line x1="418.5" y1="317" x2="418.5" y2="328.5" stroke="#3a4a52" stroke-width="0.5" stroke-opacity="0.7"/>
<path d="M416.8 317 L416.8 315.8 Q416.9 314.2 418.5 314.2 Q420.1 314.2 420.2 315.8 L420.2 317 Z" fill="#0b1118"/>
<line x1="415" y1="333.5" x2="415" y2="345" stroke="#3a4a52" stroke-width="0.5" stroke-opacity="0.7"/>
<path d="M413.3 333.5 L413.3 332.3 Q413.4 330.7 415 330.7 Q416.6 330.7 416.7 332.3 L416.7 333.5 Z" fill="#0b1118"/>
<line x1="384" y1="261" x2="384" y2="272.5" stroke="#3a4a52" stroke-width="0.5" stroke-opacity="0.7"/>
<path d="M382.3 261 L382.3 259.8 Q382.4 258.2 384 258.2 Q385.6 258.2 385.7 259.8 L385.7 261 Z" fill="#0b1118"/>
<line x1="355.5" y1="279.5" x2="355.5" y2="291" stroke="#3a4a52" stroke-width="0.5" stroke-opacity="0.7"/>
<path d="M353.8 279.5 L353.8 278.3 Q353.9 276.7 355.5 276.7 Q357.1 276.7 357.2 278.3 L357.2 279.5 Z" fill="#0b1118"/>
<line x1="326.5" y1="297" x2="326.5" y2="308.5" stroke="#3a4a52" stroke-width="0.5" stroke-opacity="0.7"/>
<path d="M324.8 297 L324.8 295.8 Q324.9 294.2 326.5 294.2 Q328.1 294.2 328.2 295.8 L328.2 297 Z" fill="#0b1118"/>
<circle cx="458.5" cy="321" r="2.9" fill="#16222c"/><path d="M456.6 319.6 L460.4 322.4 M460.2 319.4 L456.8 322.6" stroke="#cfe3ee" stroke-width="0.7"/>
<line x1="458.5" y1="324" x2="458.5" y2="336" stroke="#3a4a52" stroke-width="0.5" stroke-opacity="0.7"/>
<path d="M540.5 191 L550.5 196 M542.5 196.5 L549.5 190 M545.5 189.5 L545.5 197.5" stroke="#2f9d3f" stroke-width="0.7" fill="none"/>
<!-- axis gizmo -->
<g stroke-width="1" fill="none">
<line x1="778.6" y1="551" x2="778.6" y2="567.6" stroke="#6a66d8" stroke-width="1.3"/>
<line x1="778.6" y1="563.6" x2="787.4" y2="558.2" stroke="#3e8f57" stroke-width="0.8"/>
<line x1="775" y1="562.4" x2="789.6" y2="568" stroke="#e2666a" stroke-width="0.8"/>
</g>
<text x="780.8" y="556.4" style="font-size:5.4px;fill:#4d49c4;font-weight:bold">Z</text>
<text x="786.6" y="565.3" style="font-size:5.4px;fill:#3e8f57;font-weight:bold">Y</text>
<text x="789.2" y="574.3" style="font-size:5.4px;fill:#e2555a;font-weight:bold">X</text>
</svg>
</body>
</html>
